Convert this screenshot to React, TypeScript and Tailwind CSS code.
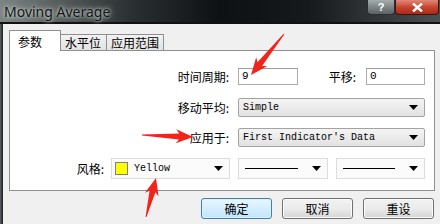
import React from "react";

const cjk = "font-['Microsoft_YaHei','Noto_Sans_CJK_SC',sans-serif]";
const mono = "font-['Liberation_Mono','Noto_Sans_CJK_SC',monospace]";

type Pt = [number, number];

// tapered red arrow as drawn on the screenshot
const arrowPoints = (tail: Pt, tip: Pt) => {
  const dx = tip[0] - tail[0];
  const dy = tip[1] - tail[1];
  const len = Math.hypot(dx, dy);
  const ux = dx / len, uy = dy / len;
  const nx = -uy, ny = ux;
  const headLen = 17, headW = 7, neckW = 3;
  const bx = tip[0] - ux * headLen, by = tip[1] - uy * headLen;
  const nb = (w: number, x: number, y: number) => `${x + nx * w},${y + ny * w}`;
  return [
    nb(0.5, tail[0], tail[1]),
    nb(neckW, bx + ux * 3, by + uy * 3),
    nb(headW, bx, by),
    `${tip[0]},${tip[1]}`,
    nb(-headW, bx, by),
    nb(-neckW, bx + ux * 3, by + uy * 3),
    nb(-0.5, tail[0], tail[1]),
  ].join(" ");
};

const Caret = () => (
  <svg width="9" height="5" viewBox="0 0 9 5" className="shrink-0">
    <path d="M0 0 H9 L4.5 5 Z" fill="#000" />
  </svg>
);

const Select = ({ children, className }: { children?: React.ReactNode; className?: string }) => (
  <div
    className={`flex items-center h-[19px] rounded-[2px] border border-[#a3a3a3] bg-gradient-to-b from-[#f4f4f4] to-[#e2e2e2] pl-[4px] pr-[6px] ${className ?? ""}`}
  >
    <div className="flex-1 flex items-center min-w-0">{children}</div>
    <Caret />
  </div>
);

const Input = ({ value, className }: { value: string; className?: string }) => (
  <div
    className={`h-[17px] border border-[#abadb3] border-t-[#9a9ca3] bg-white pl-[3px] flex items-center ${mono} text-[11px] text-black ${className ?? ""}`}
  >
    {value}
  </div>
);

const Button = ({ label, focused }: { label: string; focused?: boolean }) => (
  <div
    className={`w-[71px] h-[21px] rounded-[3px] border flex items-center justify-center text-[12px] text-black ${cjk} ${
      focused
        ? "border-[#3c7fb1] bg-gradient-to-b from-[#eaf6fd] to-[#bee6fd] shadow-[inset_0_0_0_1px_#dff2fc]"
        : "border-[#707070] bg-gradient-to-b from-[#f2f2f2] via-[#ebebeb] to-[#d5d5d5] shadow-[inset_0_0_0_1px_#fcfcfc]"
    }`}
  >
    {label}
  </div>
);

const LineSample = () => <div className="flex-1 h-px bg-black mr-[14px] ml-[2px]" />;

export default function App() {
  return (
    <div className={`relative w-[440px] h-[224px] overflow-hidden bg-[#f0f0f0] ${cjk}`}>
      {/* title bar */}
      <div className="relative h-[24px] border-b-2 border-[#111] bg-[linear-gradient(90deg,#7b8584_0%,#59615f_12%,#2a2f31_30%,#0e1114_50%,#15191c_70%,#2c3032_82%,#4a4f50_100%)]">
        <div className="absolute left-[4px] top-[1px] text-[14px] text-[#141414] font-['Noto_Sans',sans-serif] [text-shadow:0_0_6px_#cfd6d3,0_0_3px_#cfd6d3]">
          Moving Average
        </div>
        <div className="absolute right-[45px] top-0 w-[28px] h-[15px] rounded-b-[4px] border border-t-0 border-[#2b2f31] bg-gradient-to-b from-[#a4acae] to-[#5a6264] flex items-center justify-center text-[11px] font-bold text-white font-['Liberation_Sans',sans-serif] leading-none">
          ?
        </div>
        <div className="absolute right-[1px] top-0 w-[44px] h-[15px] rounded-b-[4px] border border-t-0 border-[#3b1410] bg-gradient-to-b from-[#e0877a] via-[#c8452f] to-[#a92a17] flex items-center justify-center">
          <svg width="11" height="9" viewBox="0 0 11 9">
            <path d="M1 0.5 L10 8.5 M10 0.5 L1 8.5" stroke="#fff" strokeWidth="2.4" />
          </svg>
        </div>
      </div>

      {/* body */}
      <div className="flex h-[200px]">
        <div className="w-[3px] bg-gradient-to-r from-[#5f6566] via-[#3a3e40] to-[#1c1f21]" />
        <div className="flex-1 flex flex-col pl-[6px] pr-[5px] pt-[6px]">
          {/* tabs */}
          <div className={`flex items-end h-[20px] text-[12px] text-black`}>
            <div className="relative z-10 -mb-px h-[21px] w-[52px] border border-b-0 border-[#8e8f8f] bg-white pl-[8px] pt-[2px]">
              参数
            </div>
            <div className="h-[16px] w-[46px] border border-b-0 border-l-0 border-[#8e8f8f] bg-gradient-to-b from-[#f2f2f2] to-[#e3e3e3] pl-[4px] leading-[15px]">
              水平位
            </div>
            <div className="h-[16px] w-[57px] border border-b-0 border-l-0 border-[#8e8f8f] bg-gradient-to-b from-[#f2f2f2] to-[#e3e3e3] pl-[4px] leading-[15px]">
              应用范围
            </div>
          </div>

          {/* panel */}
          <div className="h-[141px] border border-[#8e8f8f] bg-white pt-[17px] flex flex-col text-[12px] text-black">
            <div className="flex items-center h-[17px]">
              <div className="w-[219px] text-right">时间周期:</div>
              <Input value="9" className="ml-[9px] w-[60px]" />
              <div className="w-[58px] text-right">平移:</div>
              <Input value="0" className="ml-[10px] w-[59px]" />
            </div>
            <div className="flex items-center h-[19px] mt-[13px]">
              <div className="w-[219px] text-right">移动平均:</div>
              <Select className={`ml-[9px] w-[187px] ${mono} text-[10px]`}>Simple</Select>
            </div>
            <div className="flex items-center h-[19px] mt-[11px]">
              <div className="w-[219px] text-right">应用于:</div>
              <Select className={`ml-[9px] w-[187px] ${mono} text-[10px]`}>First Indicator's Data</Select>
            </div>
            <div className="flex items-center h-[21px] mt-[11px]">
              <div className="w-[94px] text-right">风格:</div>
              <div className="ml-[7px] w-[119px] h-[21px] flex items-center border border-[#dcdcdc] bg-[#fbfbfb] pl-[3px] pr-[6px]">
                <div className="w-[13px] h-[13px] bg-[#ffff00] border border-[#808080]" />
                <div className={`flex-1 ml-[6px] ${mono} text-[10px]`}>Yellow</div>
                <Caret />
              </div>
              <div className="ml-[8px] w-[90px] h-[21px] flex items-center border border-[#dcdcdc] bg-[#fbfbfb] pl-[4px] pr-[6px]">
                <LineSample />
                <Caret />
              </div>
              <div className="ml-[8px] w-[89px] h-[21px] flex items-center border border-[#dcdcdc] bg-[#fbfbfb] pl-[4px] pr-[6px]">
                <LineSample />
                <Caret />
              </div>
            </div>
          </div>

          {/* buttons */}
          <div className="flex justify-end gap-[10px] mt-[7px] pr-[1px]">
            <Button label="确定" focused />
            <Button label="取消" />
            <Button label="重设" />
          </div>
        </div>
      </div>

      {/* annotation arrows */}
      <svg className="absolute inset-0 pointer-events-none" width="440" height="224">
        <polygon points={arrowPoints([284, 34], [251, 75])} fill="#f2231b" />
        <polygon points={arrowPoints([142, 135], [193, 137])} fill="#f2231b" />
        <polygon points={arrowPoints([146, 217], [156, 178])} fill="#f2231b" />
      </svg>
    </div>
  );
}
